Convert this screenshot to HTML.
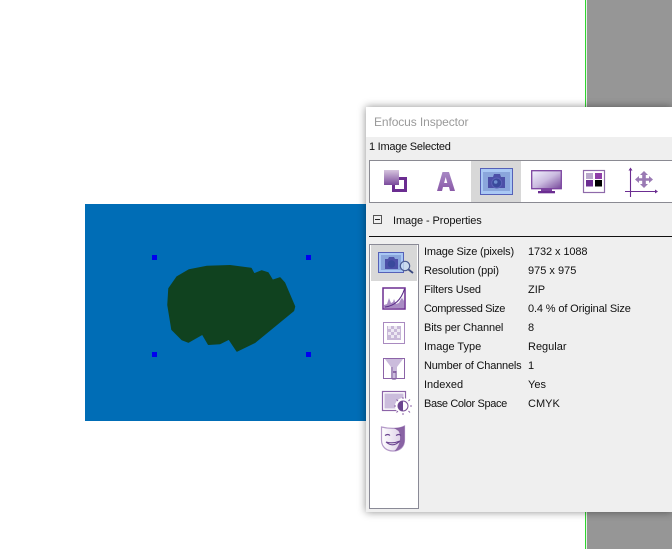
<!DOCTYPE html>
<html><head><meta charset="utf-8"><style>
html,body{margin:0;padding:0;background:#fff;}
body{width:672px;height:549px;position:relative;overflow:hidden;font-family:"Liberation Sans",sans-serif;font-size:11px;color:#111;}
.a{position:absolute;}
.t{position:absolute;white-space:nowrap;line-height:14px;}
</style></head><body>
<div class="a" style="left:585px;top:0;width:1px;height:549px;background:#2fd62f"></div>
<div class="a" style="left:586px;top:0;width:1px;height:549px;background:#e4f2e4"></div>
<div class="a" style="left:587px;top:0;width:85px;height:549px;background:#969696"></div>
<div class="a" style="left:85px;top:204px;width:281px;height:217px;background:#006db6"></div>
<svg class="a" style="left:0;top:0" width="672" height="549">
<path fill="#10421f" stroke="#10421f" stroke-width="1.500" stroke-linejoin="round" d="M169 288.500L177 277L189 270L207 266.500L230 265.800L251 268.500L254 274L261.700 271L268 273L272.500 280.500L280 278L284.500 283L294.500 306.500L293.500 310.500L254.500 342.500L237 351L229 339L220 343.500L208.500 344.300L202.500 334L188.500 342L182 339.500L172 329.500L168 305Z"/>
<g fill="#0000f0"><rect x="152" y="255" width="5" height="5"/><rect x="306" y="255" width="5" height="5"/><rect x="152" y="352" width="5" height="5"/><rect x="306" y="352" width="5" height="5"/></g>
</svg>
<div class="a" style="left:366px;top:107px;width:306px;height:405px;background:#efefef;box-shadow:0 0 8px rgba(0,0,0,.45)"></div>
<div class="a" style="left:366px;top:107px;width:306px;height:30px;background:#fff"></div>
<div class="t" style="left:374px;top:115px;color:#9a9a9a;font-size:12px;letter-spacing:-.1px">Enfocus Inspector</div>
<div class="t" style="left:369px;top:140px;letter-spacing:-.25px">1 Image Selected</div>
<div class="a" style="left:369px;top:160px;width:303px;height:43px;box-sizing:border-box;border:1px solid #8a8a92;border-right:0;background:#fff"></div>
<div class="a" style="left:471px;top:161px;width:50px;height:41px;background:#d8d8d8"></div>
<svg class="a" style="left:0;top:0" width="672" height="549">
<defs>
<linearGradient id="g1" x1="0" y1="0" x2="0" y2="1"><stop offset="0" stop-color="#d6c4de"/><stop offset="1" stop-color="#7a4a9c"/></linearGradient>
<linearGradient id="g2" x1="0" y1="0" x2="1" y2="1"><stop offset="0" stop-color="#f2f4fe"/><stop offset=".5" stop-color="#cbbce0"/><stop offset="1" stop-color="#76479a"/></linearGradient>
<linearGradient id="g3" x1="0" y1="0" x2="0" y2="1"><stop offset="0" stop-color="#a888c4"/><stop offset="1" stop-color="#8a5aa8"/></linearGradient>
<linearGradient id="g4" x1="0" y1="0" x2="1" y2="1"><stop offset="0" stop-color="#fff"/><stop offset=".6" stop-color="#fff"/><stop offset="1" stop-color="#c4aed6"/></linearGradient>
<linearGradient id="g5" x1="0" y1="0" x2="1" y2="0"><stop offset="0" stop-color="#fff"/><stop offset="1" stop-color="#d8c8e4"/></linearGradient>
</defs>
<!-- toolbar: shapes -->
<rect x="393.500" y="178.500" width="12" height="12" fill="#fff" stroke="#6b2d91" stroke-width="3"/>
<rect x="384" y="170" width="15" height="15" fill="url(#g1)"/>
<!-- A -->
<path fill="url(#g3)" fill-rule="evenodd" d="M442.500 172h6.500l6 19h-5l-1-4h-6l-1 4h-5zM445.700 177l-1.600 6h3.200z"/>
<!-- camera selected -->
<rect x="480.500" y="168.500" width="32" height="26" fill="#a9c8f4" stroke="#5560b8"/>
<rect x="483" y="172" width="27" height="19" fill="#8aa6dc"/>
<path fill="#4c50a8" d="M488 177h5l1-3h6l1 3h4v11h-17z"/>
<circle cx="496.700" cy="183" r="5" fill="#3a4a9c" stroke="#5c62b8"/><circle cx="495.700" cy="182" r="1.800" fill="#6f8fd0"/>
<!-- monitor -->
<rect x="531.700" y="170.700" width="29.600" height="18" fill="url(#g2)" stroke="#7b439f" stroke-width="1.300"/>
<rect x="541" y="189" width="11" height="2.500" fill="#7b439f"/><rect x="538" y="191" width="17" height="2.300" fill="#6b2d91"/>
<!-- swatches -->
<rect x="583.500" y="170.500" width="21" height="22" fill="#fff" stroke="#8e6aaa" stroke-width="1.200"/>
<rect x="586" y="173" width="7" height="6" fill="#b9a8cc"/><rect x="595" y="173" width="7" height="6" fill="#8f3fa8"/>
<rect x="586" y="180" width="7" height="6.500" fill="#6b2d91"/><rect x="595" y="180" width="7" height="6.500" fill="#000"/>
<!-- axes -->
<path d="M630.500 169v28M625 191.500h31" stroke="#6b2d91" stroke-width="1.100" fill="none"/>
<path fill="#6b2d91" d="M630.500 167.500l2 3h-4zM658 191.500l-3 2v-4z"/>
<path fill="#9a7ab4" d="M644 171l4 4h-2.200v3.200h3.200V176l4 3.500-4 3.500v-2.200h-3.200v3.200H648l-4 4-4-4h2.200v-3.200H639v2.200l-4-3.500 4-3.500v2.200h3.200V175H640z"/>
<!-- collapse box -->
<rect x="373.500" y="215.500" width="8" height="8" fill="#efefef" stroke="#555"/><path d="M375 219.500h5" stroke="#222"/>
<path d="M369 236.500H672" stroke="#111"/>
<!-- side panel -->
<rect x="369.500" y="244.500" width="49" height="264" fill="#fff" stroke="#8a8a96"/>
<rect x="371" y="245" width="46" height="36" fill="#d8d8d8"/>
<rect x="378.500" y="252.500" width="25" height="20" fill="#a9c8f4" stroke="#5560b8"/>
<rect x="381" y="255" width="20" height="15" fill="#8aa6dc"/>
<path fill="#4c50a8" d="M385 259h3l1-2h5l1 2h3v10h-13z"/>
<circle cx="391.500" cy="264" r="3.800" fill="#3a4a9c"/>
<circle cx="405" cy="266" r="4.700" fill="#c8dcf4" fill-opacity=".8" stroke="#4a5a90" stroke-width="1.200"/>
<path d="M408.500 269.500l4.500 3.500" stroke="#3c4a80" stroke-width="1.800"/>
<!-- histogram -->
<rect x="383" y="288" width="22" height="21" fill="url(#g4)" stroke="#6b2d91" stroke-width="1.500"/>
<path fill="#a98cc4" d="M384 308v-3l3-1 2-6 2 5 2-1 1-3 2 5 3-1 2-4 1-1 2 3v7z"/>
<path d="M385 307C394 306 401 300 404.500 289" fill="none" stroke="#5a2c88" stroke-width="1.100"/>
<!-- checker -->
<rect x="383.500" y="322.500" width="21" height="21" fill="#fff" stroke="#a98ac0"/>
<rect x="387" y="326" width="14" height="14" fill="#c8b8d8"/>
<path fill="#ede8f2" d="M388 326h3v3h-3zM394 326h3v3h-3zM391 329h3v3h-3zM397 329h3v3h-3zM388 332h3v3h-3zM394 332h3v3h-3zM391 335h3v3h-3zM397 335h3v3h-3z"/>
<!-- funnel -->
<rect x="383.500" y="358.500" width="21" height="20" fill="#fff" stroke="#8c64a8"/>
<path fill="#cbbcdc" d="M385 359h18l-6 8v11h-6v-11z"/>
<path d="M392 367v11.500c0 1 4 1 4 0V371" fill="none" stroke="#8566a2" stroke-width="1"/><path d="M393 372h3" stroke="#7a5098" stroke-width="1.500"/>
<!-- brightness -->
<rect x="382.500" y="391.500" width="23" height="19" fill="#fff" stroke="#8c64a8" stroke-width="1.200"/>
<rect x="384.500" y="393.500" width="19" height="15" fill="#cbbcdc"/>
<circle cx="403" cy="406" r="8" fill="#fff"/>
<circle cx="403" cy="406" r="5" fill="#fff" stroke="#7a5098"/>
<path fill="#6b4590" d="M403 401a5 5 0 0 0 0 10z"/>
<path d="M403 397v2M403 413v2M394 406h2M410 406h2M396.500 399.500l1.500 1.500M408.500 411l1.500 1.500M396.500 412.500l1.500-1.500M408.500 401l1.500-1.500" stroke="#8c64a8"/>
<!-- mask -->
<path d="M381.500 427c8 2 18 2 23-1v14c0 7-5 11-11.500 11s-11.500-4-11.500-11z" fill="url(#g5)" stroke="#b49ac8" stroke-width="1.200"/>
<path d="M394 428c4 0 8-.6 10.500-2v14c0 6-4 10-10 11 6-6 7-15 4-20z" fill="#7a5098" opacity=".85"/>
<path d="M385 435.500q3-2 5 0M396 435.500q3-2 5 0M386 442q7 6 14-1q-7 3-14 1" fill="none" stroke="#6b4590" stroke-width="1.100"/>
</svg>
<div class="t" style="left:393px;top:214px;letter-spacing:-.1px">Image - Properties</div>
<div class="t" style="left:424px;top:245px;letter-spacing:-.19px">Image Size (pixels)</div><div class="t" style="left:528px;top:245px;letter-spacing:-.1px">1732 x 1088</div>
<div class="t" style="left:424px;top:264px;letter-spacing:-.13px">Resolution (ppi)</div><div class="t" style="left:528px;top:264px">975 x 975</div>
<div class="t" style="left:424px;top:283px;letter-spacing:-.15px">Filters Used</div><div class="t" style="left:528px;top:283px">ZIP</div>
<div class="t" style="left:424px;top:302px;letter-spacing:-.39px">Compressed Size</div><div class="t" style="left:528px;top:302px;letter-spacing:-.14px">0.4 % of Original Size</div>
<div class="t" style="left:424px;top:321px;letter-spacing:-.13px">Bits per Channel</div><div class="t" style="left:528px;top:321px">8</div>
<div class="t" style="left:424px;top:340px">Image Type</div><div class="t" style="left:528px;top:340px">Regular</div>
<div class="t" style="left:424px;top:359px;letter-spacing:-.19px">Number of Channels</div><div class="t" style="left:528px;top:359px">1</div>
<div class="t" style="left:424px;top:378px">Indexed</div><div class="t" style="left:528px;top:378px">Yes</div>
<div class="t" style="left:424px;top:397px;letter-spacing:-.36px">Base Color Space</div><div class="t" style="left:528px;top:397px">CMYK</div>
</body></html>
